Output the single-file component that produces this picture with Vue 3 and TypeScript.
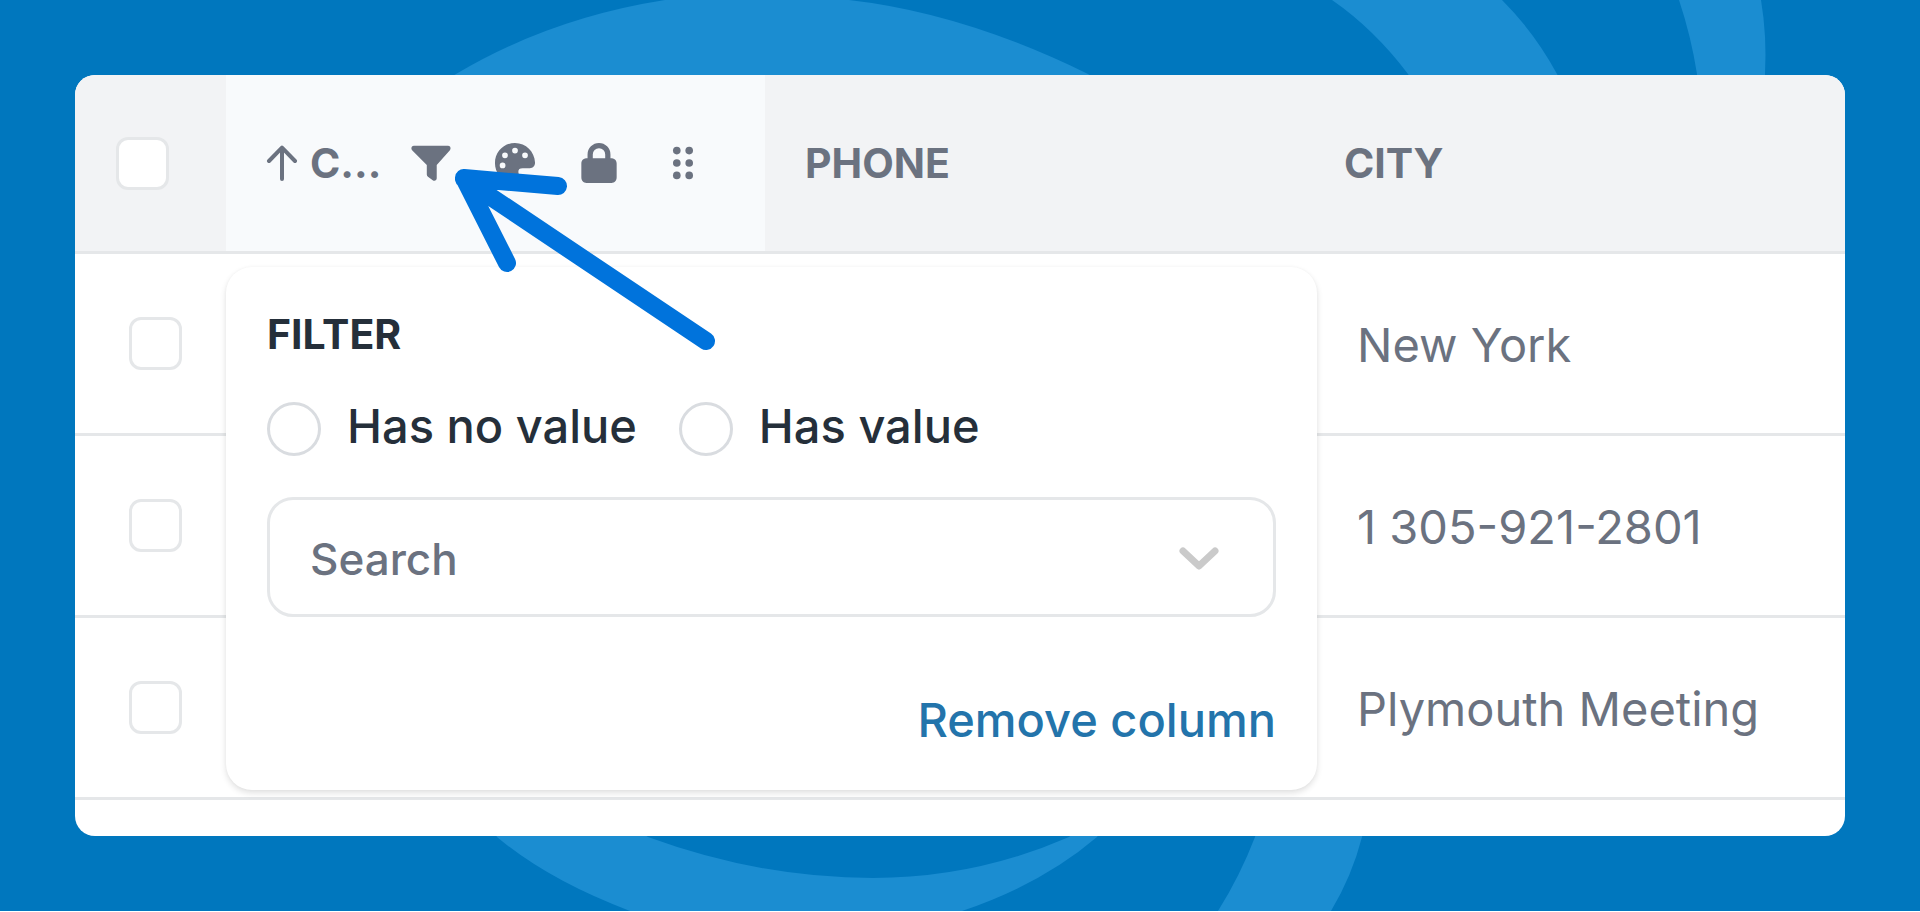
<script setup lang="ts">
import { ref } from 'vue'

interface Row {
  id: number
  phone: string
  city: string
  selected: boolean
}

const allSelected = ref(false)
const filterMode = ref('')
const search = ref('')
const rows = ref<Row[]>([
  { id: 1, phone: '', city: 'New York', selected: false },
  { id: 2, phone: '', city: '1 305-921-2801', selected: false },
  { id: 3, phone: '', city: 'Plymouth Meeting', selected: false },
])
</script>

<template>
  <main class="stage">
    <svg class="swirl" viewBox="0 0 1920 911" preserveAspectRatio="none" aria-hidden="true">
      <path d="M440 84 456 74Q550 18 665 0H849Q964 13 1088 74L1104 84Z" />
      <path d="M1332 0Q1374 29 1408 74L1414 84H1562L1557 74Q1535 33 1502 0Z" />
      <path d="M1679 0Q1691 36 1697 74V84H1765V74Q1767 36 1761 0Z" />
      <path d="M491 827 497 837Q548 880 630 911H962Q1042 884 1097 837L1104 827H1080L1069 837Q975 878 873 878 760 878 648 837L632 827Z" />
      <path d="M1258 827 1255 837Q1240 876 1218 911H1331Q1352 876 1362 837L1364 827Z" />
    </svg>

    <section class="card">
      <table class="grid">
        <colgroup>
          <col class="col-check" />
          <col class="col-data" />
          <col class="col-data" />
          <col />
        </colgroup>
        <thead>
          <tr>
            <th class="check-head">
              <input v-model="allSelected" class="tick" type="checkbox" aria-label="Select all rows" />
            </th>
            <th class="active">
              <div class="head">
                <div class="head-title">
                  <svg class="sort" viewBox="0 0 32 36" aria-hidden="true">
                    <path d="M16 34V3M3 16 16 2.6 29 16" />
                  </svg>
                  <span class="head-text">C...</span>
                </div>
                <button class="tool" type="button" aria-label="Filter">
                  <svg viewBox="0 0 44 44">
                    <path d="M4 4H40C42.500 4 43.200 7 41.800 8.700L28 24V38C28 40.500 25.500 41.200 23.800 40L18.800 36.400C18 35.700 17.600 35 17.600 34V24L2.200 8.700C.8 7 1.500 4 4 4Z" />
                  </svg>
                </button>
                <button class="tool" type="button" aria-label="Color">
                  <svg viewBox="0 0 44 44">
                    <path fill-rule="evenodd" d="M22 1C10 1 1 10.500 1 22S10 43 22 43C26 43 27.500 39 26.500 36L25.800 33C25 29.500 26 27.500 30 27.500H37.500C41 27.500 43 25 43 21.500C42.500 10 33.500 1 22 1ZM9 21.500a3 3 0 1 1 0 6 3 3 0 1 1 0-6ZM11.500 11a3 3 0 1 1 0 6 3 3 0 1 1 0-6ZM22 6a3 3 0 1 1 0 6 3 3 0 1 1 0-6ZM32.500 11a3 3 0 1 1 0 6 3 3 0 1 1 0-6Z" />
                  </svg>
                </button>
                <button class="tool" type="button" aria-label="Lock">
                  <svg viewBox="0 0 44 44">
                    <path fill-rule="evenodd" d="M10 17V13A12 12 0 0 1 34 13V17C38 17 40.500 19 40.500 22.500V37C40.500 40.500 38.500 43 35 43H9C5.500 43 3.500 40.500 3.500 37V22.500C3.500 19 6 17 10 17ZM15.500 17H28.500V13A6.500 6.500 0 0 0 15.500 13Z" />
                  </svg>
                </button>
                <button class="tool" type="button" aria-label="Move">
                  <svg viewBox="0 0 44 44">
                    <circle cx="15.500" cy="9" r="4" /><circle cx="28.500" cy="9" r="4" />
                    <circle cx="15.500" cy="22" r="4" /><circle cx="28.500" cy="22" r="4" />
                    <circle cx="15.500" cy="35" r="4" /><circle cx="28.500" cy="35" r="4" />
                  </svg>
                </button>
              </div>
            </th>
            <th>PHONE</th>
            <th>CITY</th>
          </tr>
        </thead>
        <tbody>
          <tr v-for="row in rows" :key="row.id">
            <td class="check-cell">
              <input v-model="row.selected" class="tick" type="checkbox" :aria-label="'Select ' + row.city" />
            </td>
            <td></td>
            <td>{{ row.phone }}</td>
            <td>{{ row.city }}</td>
          </tr>
        </tbody>
      </table>

      <form class="popover" @submit.prevent>
        <h2 class="title">FILTER</h2>
        <div class="options">
          <label class="option">
            <input v-model="filterMode" class="radio" type="radio" name="mode" value="empty" />
            <span>Has no value</span>
          </label>
          <label class="option">
            <input v-model="filterMode" class="radio" type="radio" name="mode" value="filled" />
            <span>Has value</span>
          </label>
        </div>
        <label class="combo">
          <input v-model="search" class="search" type="text" placeholder="Search" aria-label="Search" />
          <svg class="chevron" viewBox="0 0 40 24" aria-hidden="true">
            <path d="M4 4 20 19 36 4" />
          </svg>
        </label>
        <button class="remove" type="button">Remove column</button>
      </form>

      <svg class="pointer" viewBox="0 0 270 190" aria-hidden="true">
        <path d="M252 172 10 10M104 17 10 9 53 94" />
      </svg>
    </section>
  </main>
</template>

<style>
body {
  margin: 0;
  background: #fff;
}
</style>

<style scoped>
.stage {
  position: relative;
  box-sizing: border-box;
  display: flex;
  min-height: calc(100vh - 1px);
  padding: 75px;
  overflow: hidden;
  background: #0077be;
  font-family: Inter, "Liberation Sans", sans-serif;
  color: #6b7280;
}

.swirl {
  position: absolute;
  inset: 0;
  width: 100%;
  height: 100%;
  fill: #1b8dd1;
}

.card {
  position: relative;
  flex: 1;
  min-width: 0;
  border-radius: 20px;
  background: #fff;
}

.grid {
  width: 100%;
  table-layout: fixed;
  border-collapse: separate;
  border-spacing: 0;
}

.col-check {
  width: 151px;
}

.col-data {
  width: 539px;
}

th,
td {
  box-sizing: border-box;
  border-bottom: 3px solid #e5e7e9;
  text-align: left;
  vertical-align: middle;
  white-space: nowrap;
}

th {
  height: 179px;
  padding: 0 40px;
  background: #f2f3f5;
  font-size: 41px;
  font-weight: 700;
}

th:first-child {
  border-top-left-radius: 20px;
}

th:last-child {
  border-top-right-radius: 20px;
}

th.active {
  background: #f8fafc;
}

td {
  height: 182px;
  padding: 2px 53px 0;
  font-size: 47px;
  font-weight: 400;
}

th.check-head {
  padding: 0 0 0 41px;
}

td.check-cell {
  padding: 0 0 0 54px;
}

.tick {
  display: block;
  appearance: none;
  width: 53px;
  height: 53px;
  margin: 0;
  border: 3px solid #e5e7e9;
  border-radius: 12px;
  background: #fff;
}

.head {
  display: flex;
  align-items: center;
}

.head-title {
  display: flex;
  flex: 1;
  align-items: center;
  gap: 12px;
  min-width: 0;
}

.sort {
  flex: none;
  width: 32px;
  height: 36px;
  fill: none;
  stroke: #6b7280;
  stroke-width: 4;
  stroke-linecap: round;
  stroke-linejoin: round;
}

.tool {
  display: flex;
  flex: none;
  justify-content: center;
  width: 84px;
  padding: 0;
  border: 0;
  background: none;
}

.tool svg {
  width: 42px;
  height: 42px;
  fill: #6b7280;
}

.popover {
  position: absolute;
  top: 192px;
  left: 151px;
  box-sizing: border-box;
  display: flex;
  flex-direction: column;
  width: 1091px;
  height: 523px;
  padding: 43px 41px 40px;
  border-radius: 26px;
  background: #fff;
  box-shadow: 0 3px 6px rgba(0, 0, 0, 0.12), 0 0 3px rgba(0, 0, 0, 0.03);
}

.title {
  margin: 0;
  font-size: 41px;
  line-height: 48px;
  font-weight: 700;
  color: #252f3a;
}

.options {
  display: flex;
  gap: 42px;
  margin-top: 38px;
}

.option {
  display: flex;
  align-items: flex-end;
  gap: 26px;
  height: 60px;
  font-size: 47px;
  line-height: 60px;
  font-weight: 500;
  color: #252f3a;
}

.radio {
  appearance: none;
  width: 54px;
  height: 54px;
  margin: 0;
  border: 3px solid #d9dce0;
  border-radius: 50%;
  background: #fff;
}

.combo {
  box-sizing: border-box;
  display: flex;
  align-items: center;
  height: 120px;
  margin-top: 41px;
  padding: 4px 54px 0 40px;
  border: 3px solid #e5e7e9;
  border-radius: 26px;
}

.search {
  flex: 1;
  min-width: 0;
  padding: 0;
  border: 0;
  outline: 0;
  background: none;
  color: #6b7280;
  font: 500 44px/60px Inter, "Liberation Sans", sans-serif;
}

.search::placeholder {
  color: #6b7280;
  opacity: 1;
}

.chevron {
  width: 40px;
  height: 24px;
  fill: none;
  stroke: #cacaca;
  stroke-width: 7;
  stroke-linecap: round;
  stroke-linejoin: round;
}

.remove {
  align-self: flex-end;
  margin-top: auto;
  padding: 0;
  border: 0;
  background: none;
  color: #2374ab;
  font: 500 47px/60px Inter, "Liberation Sans", sans-serif;
}

.pointer {
  position: absolute;
  top: 94px;
  left: 379px;
  width: 270px;
  height: 190px;
  fill: none;
  stroke: #0073dc;
  stroke-width: 18;
  stroke-linecap: round;
  stroke-linejoin: round;
}
</style>
